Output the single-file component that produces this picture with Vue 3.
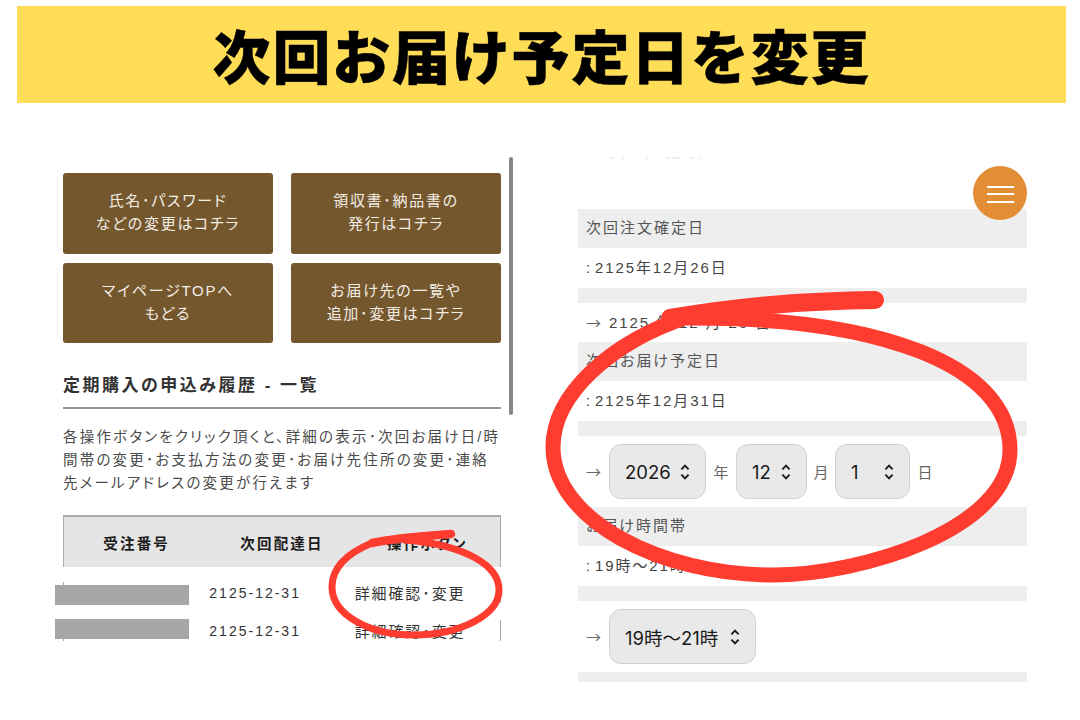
<script setup>
const buttons = [
  ['氏名･パスワード', 'などの変更はコチラ'],
  ['領収書･納品書の', '発行はコチラ'],
  ['マイページTOPへ', 'もどる'],
  ['お届け先の一覧や', '追加･変更はコチラ'],
]
const rows = ['2125-12-31', '2125-12-31']
</script>

<template>
  <div class="page">
    <header class="banner"><h1>次回お届け予定日を変更</h1></header>
    <div class="columns">
      <section class="left">
        <div class="btn-grid">
          <a v-for="b in buttons" :key="b[0]" class="btn">{{ b[0] }}<br />{{ b[1] }}</a>
        </div>
        <h2 class="heading">定期購入の申込み履歴 - 一覧</h2>
        <p class="lead">各操作ボタンをクリック頂くと、詳細の表示･次回お届け日/時<br />間帯の変更･お支払方法の変更･お届け先住所の変更･連絡<br />先メールアドレスの変更が行えます</p>
        <div class="thead">
          <div>受注番号</div>
          <div>次回配達日</div>
          <div>操作ボタン</div>
        </div>
        <div class="tbody">
          <div v-for="(r, i) in rows" :key="i" class="trow">
            <div class="redact"></div>
            <div></div>
            <div class="cell">{{ r }}</div>
            <div class="cell action">詳細確認･変更</div>
          </div>
        </div>
      </section>

      <section class="right">
        <svg class="specks" viewBox="0 0 449 3" width="449" height="3"><path d="M32 1h3M44 1h2M68 1h2M88 1h3M94 1h8M112 1h3M120 1h2" /></svg>
        <div class="label">次回注文確定日</div>
        <div class="value"><i class="colon">:</i>2125年12月26日</div>
        <div class="gap"></div>
        <div class="value short"><span class="arrow">→</span>2125 年 12 月 26 日</div>
        <div class="label">次回お届け予定日</div>
        <div class="value"><i class="colon">:</i>2125年12月31日</div>
        <div class="gap"></div>
        <div class="form-row">
          <span class="arrow">→</span>
          <div class="select s-year">2026
            <svg viewBox="0 0 12 20" width="12" height="18"><path d="M2 7l4-4 4 4M2 13l4 4 4-4" /></svg>
          </div>
          <span class="unit">年</span>
          <div class="select s-month">12
            <svg viewBox="0 0 12 20" width="12" height="18"><path d="M2 7l4-4 4 4M2 13l4 4 4-4" /></svg>
          </div>
          <span class="unit narrow">月</span>
          <div class="select s-day">1
            <svg viewBox="0 0 12 20" width="12" height="18"><path d="M2 7l4-4 4 4M2 13l4 4 4-4" /></svg>
          </div>
          <span class="unit">日</span>
        </div>
        <div class="label">お届け時間帯</div>
        <div class="value"><i class="colon">:</i>19時～21時</div>
        <div class="gap"></div>
        <div class="form-row">
          <span class="arrow">→</span>
          <div class="select s-time">19時～21時
            <svg viewBox="0 0 12 20" width="12" height="18"><path d="M2 7l4-4 4 4M2 13l4 4 4-4" /></svg>
          </div>
        </div>
        <div class="gap last"></div>
      </section>
    </div>

    <div class="scrollbar"></div>
    <button class="burger" aria-label="menu"><span></span><span></span><span></span></button>

    <svg class="marks" viewBox="0 0 1080 720" width="1080" height="720">
      <path class="big" d="M875 300C820 301 760 303 690 316C610 342 553 395 553 447C553 520 660 575 773 575C860 575 1010 530 1010 450C1010 365 880 316 680 318" />
      <path class="tail" d="M875 300C820 301 760 303 670 318" />
      <path class="small" d="M451 534C425 536 395 538 372 543C350 552 332 565 332 587C332 615 370 635 413 635C460 635 499 615 499 590C499 565 465 545 405 540" />
      <path class="small-tail" d="M451 534C425 536 395 538 372 543" />
    </svg>
  </div>
</template>

<style>
html, body { margin: 0; background: #fff; }
</style>

<style scoped>
.page {
  position: relative;
  width: 1080px;
  height: 720px;
  overflow: hidden;
  background: #fff;
  font-family: "Liberation Sans", "Noto Sans CJK JP", sans-serif;
  font-feature-settings: "palt";
  color: #444;
}
.banner {
  margin: 6px 14px 0 17px;
  height: 97px;
  background: #ffdd57;
  display: flex;
  align-items: center;
  justify-content: center;
}
.banner h1 {
  margin: 0;
  font-family: "Noto Sans CJK JP", sans-serif;
  font-feature-settings: normal;
  font-size: 58px;
  font-weight: 900;
  color: #000;
  letter-spacing: 1.8px;
  line-height: 97px;
  white-space: nowrap;
  -webkit-text-stroke: 0.5px #000;
}
.columns { display: flex; align-items: flex-start; }
.left { width: 438px; margin-left: 63px; padding-top: 70px; }
.btn-grid {
  display: grid;
  grid-template-columns: 210px 210px;
  grid-template-rows: 81px 80px;
  column-gap: 18px;
  row-gap: 9px;
}
.btn {
  background: #75572e;
  border-radius: 3px;
  color: #f2ede4;
  font-size: 15px;
  line-height: 23px;
  letter-spacing: 1.7px;
  text-align: center;
  display: block;
  padding-top: 16px;
  box-sizing: border-box;
  white-space: nowrap;
}
.heading {
  margin: 29px 0 0;
  font-size: 17px;
  line-height: 27px;
  font-weight: 700;
  letter-spacing: 2.5px;
  color: #333;
  border-bottom: 2px solid #a09393;
  height: 25px;
  padding-bottom: 10px;
}
.lead {
  margin: 17px 0 0;
  font-size: 14.5px;
  line-height: 23px;
  letter-spacing: 2.2px;
  color: #4a4a4a;
  white-space: nowrap;
}
.thead {
  margin-top: 20px;
  height: 50px;
  display: grid;
  grid-template-columns: repeat(3, 1fr);
  align-items: center;
  background: #e5e5e5;
  border: solid #aaa;
  border-width: 2px 1.5px 0;
  text-align: center;
  font-size: 14.5px;
  font-weight: 700;
  letter-spacing: 2.2px;
  color: #1c1c1c;
}
.tbody { margin-top: 15px; display: flex; flex-direction: column; gap: 17px; }
.trow {
  position: relative;
  height: 21px;
  display: grid;
  grid-template-columns: repeat(3, 1fr);
  border: solid #aaa;
  border-width: 0 1.5px;
  font-size: 14px;
  line-height: 23px;
  letter-spacing: 2px;
  color: #333;
  white-space: nowrap;
}
.action { font-size: 15px; letter-spacing: 1.9px; }
.redact {
  position: absolute;
  left: -9.5px;
  top: 3px;
  width: 134px;
  height: 20px;
  background: #a6a6a6;
}
.trow:nth-child(2) .redact { top: -1px; }
.right { width: 449px; margin-left: 77px; padding-top: 54px; }
.specks { display: block; margin-bottom: 49px; }
.specks path { stroke: #ddd; stroke-width: 1; fill: none; }
.label {
  height: 39px;
  background: #eee;
  padding-left: 8px;
  font-size: 15px;
  line-height: 37px;
  letter-spacing: 2px;
  color: #555;
}
.value {
  height: 40px;
  padding-left: 8px;
  font-size: 15px;
  line-height: 40px;
  letter-spacing: 1.9px;
  color: #444;
  white-space: nowrap;
}
.value.short { height: 39px; display: flex; }
.value.short .arrow { line-height: 39px; }
.colon { font-style: normal; display: inline-block; width: 9px; }
.gap { height: 15px; background: #eee; }
.gap.last { height: 10px; }
.form-row {
  height: 71px;
  display: flex;
  align-items: center;
  padding-left: 8px;
  font-size: 15px;
  color: #555;
}
.arrow {
  width: 23px;
  flex: none;
  letter-spacing: 0;
  color: #666;
  font-family: "Noto Sans CJK JP", sans-serif;
  font-feature-settings: normal;
}
.select {
  height: 55px;
  box-sizing: border-box;
  background: #e9e9e9;
  border: 1px solid #d2d2d2;
  border-radius: 12px;
  display: flex;
  align-items: center;
  justify-content: space-between;
  padding: 0 14px 0 15px;
  font-family: Inter, "Noto Sans CJK JP", sans-serif;
  font-feature-settings: normal;
  font-size: 18.5px;
  color: #1a1a1a;
  flex: none;
}
.select svg { fill: none; stroke: #1a1a1a; stroke-width: 2.1; }
.s-year { width: 97px; }
.s-month { width: 71px; }
.s-day { width: 75px; }
.s-time { width: 147px; }
.unit { width: 30px; flex: none; text-align: center; color: #666; font-size: 15px; }
.unit.narrow { width: 28px; }
.scrollbar {
  position: absolute;
  left: 509px;
  top: 157px;
  width: 4px;
  height: 258px;
  border-radius: 2px;
  background: #858585;
}
.burger {
  position: absolute;
  left: 973px;
  top: 166px;
  width: 54px;
  height: 54px;
  border: 0;
  padding: 2px 0 0;
  border-radius: 50%;
  background: #e38e36;
  display: flex;
  flex-direction: column;
  align-items: center;
  justify-content: center;
  gap: 5.5px;
}
.burger span { width: 27px; height: 2px; background: #fff; }
.marks { position: absolute; left: 0; top: 0; pointer-events: none; }
.marks path { fill: none; stroke: #fe3c30; stroke-linecap: round; stroke-linejoin: round; }
.big { stroke-width: 15; }
.marks .tail { stroke-width: 18; }
.small { stroke-width: 7; }
.marks .small-tail { stroke-width: 8.5; }
</style>
